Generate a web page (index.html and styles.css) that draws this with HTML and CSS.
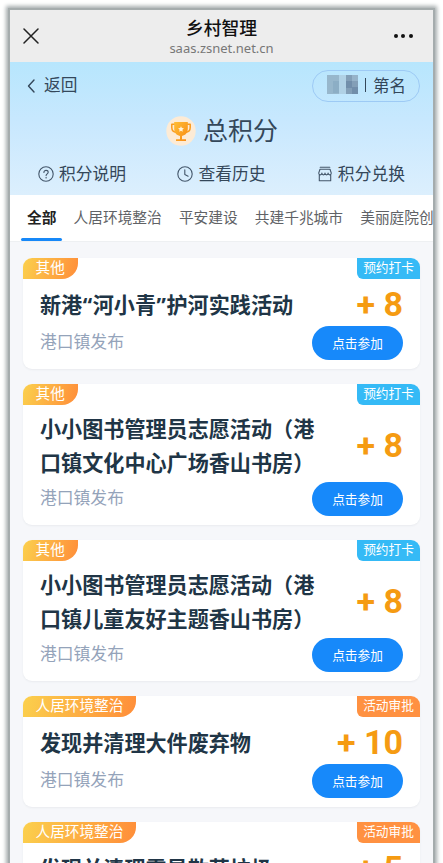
FILE: index.html
```html
<!DOCTYPE html>
<html lang="zh-CN">
<head>
<meta charset="utf-8">
<title>乡村智理</title>
<link rel="stylesheet" href="styles.css">
</head>
<body>
<div class="phone">
  <header class="appbar">
    <svg class="close" viewBox="0 0 16 16"><path d="M1 1 15 15M15 1 1 15"/></svg>
    <div class="site"><h1>乡村智理</h1><p>saas.zsnet.net.cn</p></div>
    <div class="more"><i></i><i></i><i></i></div>
  </header>
  <section class="hero">
    <div class="hero-top">
      <a class="back"><svg viewBox="0 0 8 14"><path d="M7 1 1.5 7 7 13"/></svg>返回</a>
      <div class="rank">
        <svg class="mosaic" viewBox="0 0 31 19"><path fill="#97b7cc" d="M0 0h12v19H0z"/><path fill="#8caec5" d="M6 6h6v12H6z"/><path fill="#b0d1e5" d="M12 0h7v19h-7z"/><path fill="#839fb7" d="M19 0h12v19H19z"/><path fill="#718eaa" d="M19 6h6v7h-6zM25 12h6v7h-6z"/><path fill="#96b3c9" d="M25 0h6v6h-6z"/></svg>
        <span class="bar"></span>第名
      </div>
    </div>
    <div class="total">
      <svg viewBox="0 0 30 30"><defs><linearGradient id="cup" x1="0" y1="0" x2="1" y2="1"><stop offset="0" stop-color="#ffbd35"/><stop offset="1" stop-color="#f88a12"/></linearGradient></defs><circle cx="15" cy="15" r="14.7" fill="#fdebd5"/><path d="M9 8.2H5.8v3.2c0 3 2.1 4.6 4.7 5M21 8.2h3.2v3.2c0 3-2.1 4.6-4.7 5" fill="none" stroke="#f99b1d" stroke-width="1.5"/><path d="M8.2 6h13.6v6.5c0 4.2-2.3 6.9-5.8 7.4v3.3h4v1.9H10v-1.9h4v-3.3c-3.5-.5-5.8-3.2-5.8-7.4z" fill="url(#cup)"/><path d="m15 10.2.9 1.8 2 .3-1.5 1.4.4 2-1.8-1-1.8 1 .4-2-1.5-1.4 2-.3z" fill="#fff3dc"/></svg>
      <span>总积分</span>
    </div>
    <nav class="links">
      <a><svg viewBox="0 0 16 16"><circle cx="8" cy="8" r="7.2"/><path d="M5.9 6.4c0-2.7 4.3-2.6 4.3-.1 0 1.5-2.1 1.6-2.1 3.2M8.1 11.2v.7"/></svg>积分说明</a>
      <a><svg viewBox="0 0 16 16"><circle cx="8" cy="8" r="7.2"/><path d="M7.8 3.8v4.8l3.3 1.6"/></svg>查看历史</a>
      <a><svg viewBox="0 0 16 16"><path d="M3.2 1.2h9.6M3 3.3h10l1.3 3.8c0 2.3-3.1 2.3-3.2 0 0 2.3-3.1 2.3-3.1 0 0 2.3-3.1 2.3-3.1 0-.1 2.3-3.2 2.3-3.2 0zM2.3 9.2v5.6h11.4V9.2"/></svg>积分兑换</a>
    </nav>
  </section>
  <nav class="tabs">
    <a class="on">全部</a><a>人居环境整治</a><a>平安建设</a><a>共建千兆城市</a><a>美丽庭院创</a>
  </nav>
  <main class="list">
    <article class="card">
      <div class="tags"><span class="kind">其他</span><span class="mode">预约打卡</span></div>
      <div class="row"><h2>新港<q>“</q>河小青<q>”</q>护河实践活动</h2><b>+ 8</b></div>
      <div class="foot"><span>港口镇发布</span><button>点击参加</button></div>
    </article>
    <article class="card tall">
      <div class="tags"><span class="kind">其他</span><span class="mode">预约打卡</span></div>
      <div class="row"><h2>小小图书管理员志愿活动（港口镇文化中心广场香山书房）</h2><b>+ 8</b></div>
      <div class="foot"><span>港口镇发布</span><button>点击参加</button></div>
    </article>
    <article class="card tall">
      <div class="tags"><span class="kind">其他</span><span class="mode">预约打卡</span></div>
      <div class="row"><h2>小小图书管理员志愿活动（港口镇儿童友好主题香山书房）</h2><b>+ 8</b></div>
      <div class="foot"><span>港口镇发布</span><button>点击参加</button></div>
    </article>
    <article class="card">
      <div class="tags"><span class="kind">人居环境整治</span><span class="mode review">活动审批</span></div>
      <div class="row"><h2>发现并清理大件废弃物</h2><b>+ 10</b></div>
      <div class="foot"><span>港口镇发布</span><button>点击参加</button></div>
    </article>
    <article class="card">
      <div class="tags"><span class="kind">人居环境整治</span><span class="mode review">活动审批</span></div>
      <div class="row"><h2>发现并清理零星散落垃圾</h2><b>+ 5</b></div>
    </article>
  </main>
</div>
</body>
</html>
```
FILE: styles.css
```css
* { box-sizing: border-box; margin: 0; padding: 0; }
html, body { height: 863px; overflow: hidden; background: #fff; }
body { padding: 10px 10px 0; font-family: Roboto, "Noto Sans CJK SC", sans-serif; }
svg { display: block; flex: none; fill: none; stroke-linecap: round; stroke-linejoin: round; }
.phone { width: 423px; height: 853px; overflow: hidden; background: #f6f7fa; box-shadow: 0 0 0 2px #a5acad, 0 0 4px 4px #a5acad, 0 10px 0 2px #a5acad; }

.appbar { height: 52px; background: #ededed; display: flex; align-items: center; justify-content: space-between; padding: 0 20px 0 13px; }
.close { width: 16px; height: 16px; stroke: #222; stroke-width: 1.5; }
.site { text-align: center; padding-left: 10px; }
.site h1 { font-size: 17.8px; line-height: 22px; font-weight: 500; color: #111; padding-top: 2px; }
.site p { font-size: 13px; line-height: 17px; color: #777; font-family: "Noto Sans", sans-serif; }
.more { display: flex; gap: 3.5px; }
.more i { width: 4px; height: 4px; border-radius: 50%; background: #111; }

.hero { height: 133px; background: linear-gradient(#b7e6fd, #c8e8fe 45%, #dceffd); color: #34475a; }
.hero-top { height: 48px; display: flex; align-items: center; justify-content: space-between; padding: 0 13px 0 17px; }
.back { display: flex; align-items: center; gap: 9px; font-size: 16.7px; line-height: 22px; }
.back svg { width: 8px; height: 14px; stroke: #34475a; stroke-width: 1.4; }
.rank { width: 108px; height: 32px; border: 1px solid #9dcaf5; border-radius: 16px; display: flex; align-items: center; padding: 0 0 2px 14px; font-size: 16.5px; }
.mosaic { width: 31px; height: 19px; margin-top: -2px; }
.bar { width: 1px; height: 14px; background: #34475a; margin: 0 7px; }
.total { height: 42px; display: flex; align-items: center; justify-content: center; gap: 7px; font-size: 25px; padding-left: 1px; }
.total svg { width: 30px; height: 30px; }
.total span { margin-top: -5px; }
.links { height: 43px; display: flex; align-items: center; justify-content: space-between; padding: 0 28px; }
.links a { display: flex; align-items: center; gap: 5px; font-size: 16.8px; line-height: 22px; }
.links svg { width: 16px; height: 16px; stroke: #43566a; stroke-width: 1.1; }

.tabs { height: 47px; background: #fff; display: flex; gap: 17.2px; padding-left: 17px; overflow: hidden; white-space: nowrap; font-size: 14.7px; line-height: 46px; color: #606266; border-bottom: 1px solid #eef0f2; }
.tabs a { flex: none; }
.tabs .on { font-weight: 700; color: #222; position: relative; }
.tabs .on::after { content: ""; position: absolute; left: -6px; right: -6px; top: 43px; height: 3px; border-radius: 2px; background: #1788f8; }

.list { padding: 16px 13px 0; display: grid; gap: 14.7px; }
.card { height: 111.3px; background: #fff; border-radius: 9px; box-shadow: 0 1px 2px #e9ebef; display: flex; flex-direction: column; overflow: hidden; }
.card.tall { height: 141.3px; }
.tags { flex: none; height: 21px; display: flex; justify-content: space-between; color: #fff; line-height: 20px; }
.kind { font-size: 14.65px; padding: 0 13px 0 12.5px; background: linear-gradient(105deg, #fbd04d, #ff8d39); border-bottom-right-radius: 16px; }
.mode { width: 63px; text-align: center; font-size: 12.7px; background: #35baf6; border-bottom-left-radius: 6px; }
.mode.review { background: #ff9141; }
.row { flex: 0 0 47.3px; display: flex; align-items: center; justify-content: space-between; padding: 0 17px; }
.tall .row { flex-basis: 77.3px; }
.row h2 { width: 275px; font-size: 21.1px; line-height: 34px; font-weight: 700; color: #203546; padding-top: 6px; margin-right: -20px; }
.tall h2 { padding-top: 7px; }
.row q { quotes: none; display: inline-block; width: 10.5px; text-align: center; font-family: "Noto Sans", sans-serif; }
.row q::before, .row q::after { content: none; }
.row b { font: 700 34px/38px Roboto, sans-serif; color: #f59b12; white-space: nowrap; padding-top: 3px; }
.foot { flex: none; height: 43px; display: flex; justify-content: space-between; padding: 0 17px; font-size: 16.8px; color: #94a3ba; }
.foot span { line-height: 33px; }
.foot button { width: 91px; height: 34px; border: 0; border-radius: 17px; background: #1789fa; color: #fff; font: 12.7px "Noto Sans CJK SC", sans-serif; padding-bottom: 2px; }
```
